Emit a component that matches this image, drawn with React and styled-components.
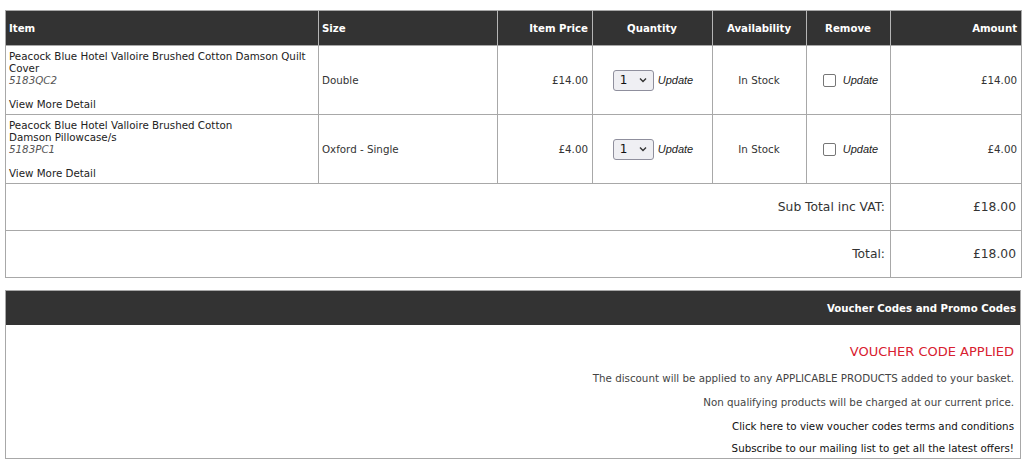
import styled, { createGlobalStyle } from "styled-components";

const Global = createGlobalStyle`
  body {
    margin: 0;
    background: #fff;
    font-family: "DejaVu Sans", Verdana, sans-serif;
    color: #333;
  }
`;

const Page = styled.div`
  padding: 10px 3px 0 5px;
  display: flex;
  flex-direction: column;
  gap: 12px;
`;

const Basket = styled.table`
  width: 1016px;
  border-collapse: collapse;
  table-layout: fixed;
  border: 1px solid #a8a8a8;
  font-size: 10.3px;
`;

const Head = styled.th`
  background: #333;
  color: #fff;
  font-weight: bold;
  font-size: 10.2px;
  height: 34px;
  padding: 0 4px 0 3px;
  text-align: ${(p) => p.$align || "left"};
  border-left: 1px solid #b5b5b5;
  border-bottom: 1px solid #a8a8a8;
  &:first-child { border-left: none; }
`;

const Cell = styled.td`
  padding: 4px 4px 4px 3px;
  line-height: 12px;
  vertical-align: middle;
  text-align: ${(p) => p.$align || "left"};
  border: 1px solid #a8a8a8;
  color: #333;
`;

const ItemName = styled.div`
  color: #222;
`;

const Code = styled.div`
  font-style: italic;
  color: #555;
  margin-bottom: 12px;
`;

const Detail = styled.a`
  color: #222;
  text-decoration: none;
`;

const Controls = styled.div`
  display: flex;
  align-items: center;
  justify-content: center;
  gap: 4px;
  padding-left: ${(p) => p.$shift || 0}px;
`;

const QtySelect = styled.div`
  width: 41px;
  height: 21px;
  box-sizing: border-box;
  border: 1px solid #8f8f9d;
  border-radius: 3px;
  background: #efeff3;
  display: flex;
  align-items: center;
  justify-content: space-between;
  padding: 0 6px;
  font-size: 12px;
  color: #111;
  svg { display: block; }
`;

const Box = styled.span`
  width: 13px;
  height: 13px;
  box-sizing: border-box;
  border: 1px solid #767676;
  border-radius: 2px;
  background: #fff;
  margin-right: 3px;
`;

const UpdateLink = styled.span`
  font-family: "Liberation Sans", Arial, sans-serif;
  font-style: italic;
  font-size: 11px;
  color: #222;
`;

const TotalCell = styled.td`
  height: 46px;
  padding: 0 5px;
  text-align: right;
  vertical-align: middle;
  border: 1px solid #a8a8a8;
  font-size: 12.3px;
  color: #333;
`;

const Panel = styled.section`
  width: 1016px;
  box-sizing: border-box;
  border: 1px solid #a8a8a8;
`;

const PanelHead = styled.div`
  background: #333;
  color: #fff;
  font-weight: bold;
  font-size: 10.2px;
  height: 34px;
  display: flex;
  align-items: center;
  justify-content: flex-end;
  padding: 0 4px;
`;

const PanelBody = styled.div`
  display: flex;
  flex-direction: column;
  align-items: flex-end;
  padding: 18px 6px 0;
  font-size: 10.3px;
`;

const Applied = styled.div`
  color: #d8202f;
  font-size: 13px;
  line-height: 18px;
  margin-bottom: 5px;
`;

const Note = styled.div`
  line-height: ${(p) => (p.$last ? "20px" : "24px")};
  color: ${(p) => (p.$strong ? "#111" : "#444")};
`;

const Chevron = () => (
  <svg width="8" height="6" viewBox="0 0 8 6">
    <path d="M1 1.5 L4 4.5 L7 1.5" fill="none" stroke="#333" strokeWidth="1.4" />
  </svg>
);

const items = [
  {
    name: ["Peacock Blue Hotel Valloire Brushed Cotton Damson Quilt Cover"],
    code: "5183QC2",
    size: "Double",
    price: "£14.00",
  },
  {
    name: ["Peacock Blue Hotel Valloire Brushed Cotton", "Damson Pillowcase/s"],
    code: "5183PC1",
    size: "Oxford - Single",
    price: "£4.00",
  },
];

export default function App() {
  return (
    <>
      <Global />
      <Page>
        <Basket>
          <colgroup>
            <col style={{ width: 313 }} />
            <col style={{ width: 179 }} />
            <col style={{ width: 95 }} />
            <col style={{ width: 120 }} />
            <col style={{ width: 94 }} />
            <col style={{ width: 84 }} />
            <col style={{ width: 131 }} />
          </colgroup>
          <thead>
            <tr>
              <Head>Item</Head>
              <Head>Size</Head>
              <Head $align="right">Item Price</Head>
              <Head $align="center">Quantity</Head>
              <Head $align="center">Availability</Head>
              <Head $align="center">Remove</Head>
              <Head $align="right">Amount</Head>
            </tr>
          </thead>
          <tbody>
            {items.map((it) => (
              <tr key={it.code}>
                <Cell>
                  <ItemName>
                    {it.name.map((line, i) => (
                      <div key={i}>{line}</div>
                    ))}
                  </ItemName>
                  <Code>{it.code}</Code>
                  <Detail href="#">View More Detail</Detail>
                </Cell>
                <Cell>{it.size}</Cell>
                <Cell $align="right">{it.price}</Cell>
                <Cell>
                  <Controls $shift={2}>
                    <QtySelect>
                      1 <Chevron />
                    </QtySelect>
                    <UpdateLink>Update</UpdateLink>
                  </Controls>
                </Cell>
                <Cell $align="center">In Stock</Cell>
                <Cell>
                  <Controls $shift={5}>
                    <Box />
                    <UpdateLink>Update</UpdateLink>
                  </Controls>
                </Cell>
                <Cell $align="right">{it.price}</Cell>
              </tr>
            ))}
            <tr>
              <TotalCell colSpan={6}>Sub Total inc VAT:</TotalCell>
              <TotalCell>£18.00</TotalCell>
            </tr>
            <tr>
              <TotalCell colSpan={6}>Total:</TotalCell>
              <TotalCell>£18.00</TotalCell>
            </tr>
          </tbody>
        </Basket>

        <Panel>
          <PanelHead>Voucher Codes and Promo Codes</PanelHead>
          <PanelBody>
            <Applied>VOUCHER CODE APPLIED</Applied>
            <Note>The discount will be applied to any APPLICABLE PRODUCTS added to your basket.</Note>
            <Note>Non qualifying products will be charged at our current price.</Note>
            <Note $strong>Click here to view voucher codes terms and conditions</Note>
            <Note $strong $last>Subscribe to our mailing list to get all the latest offers!</Note>
          </PanelBody>
        </Panel>
      </Page>
    </>
  );
}
